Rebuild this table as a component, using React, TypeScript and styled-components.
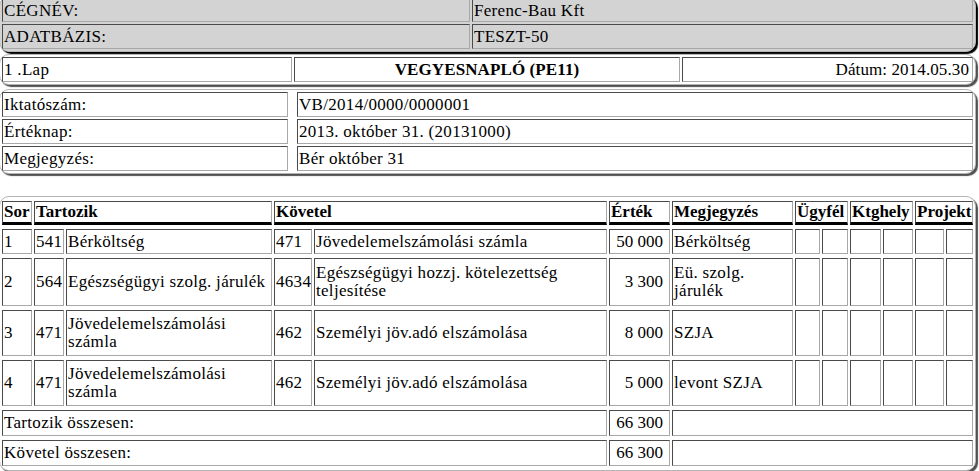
import React from 'react';
import styled, { createGlobalStyle } from 'styled-components';

const GlobalStyle = createGlobalStyle`
  *, *::before, *::after { box-sizing: border-box; }
  html, body { margin: 0; padding: 0; background: #fff; }
  body {
    font-family: "Liberation Serif", serif;
    font-size: 17px;
    color: #000;
  }
`;

const Page = styled.div`
  width: 979px;
  height: 471px;
  overflow: hidden;
`;

const Panel = styled.table<{ $top?: number; $vgap?: number; $gray?: boolean; $dark?: boolean }>`
  width: calc(100% - 2px);
  margin: ${p => p.$top ?? 2}px 0 0 -1px;
  table-layout: fixed;
  border-collapse: separate;
  border-spacing: 2px ${p => p.$vgap ?? 2}px;
  border: 1px solid #b4b4b4;
  border-radius: 10px;
  background: ${p => (p.$gray ? '#d3d3d3' : '#fff')};
  box-shadow: 2px 2px 1px ${p => (p.$dark ? '#000' : '#505050')};
  color: #000;
`;

const Row = styled.tr<{ $h?: number }>`
  height: ${p => p.$h ?? 25}px;
`;

const Cell = styled.td`
  padding: 0 1px;
  border: 1px solid;
  border-color: #4a4a4a #a8a8a8 #a8a8a8 #4a4a4a;
  vertical-align: middle;
  text-align: left;
  font-family: "Liberation Serif", serif;
  font-size: 17px;
  letter-spacing: 0.3px;
  line-height: 18px;
  overflow: hidden;
`;

const Title = styled(Cell)`
  text-align: center;
  font-weight: 700;
  letter-spacing: 0.1px;
`;

const DateCell = styled(Cell)`
  text-align: right;
  padding-right: 3px;
  letter-spacing: 0.1px;
`;

const Num = styled(Cell)`
  text-align: right;
  padding-right: 6px;
  white-space: nowrap;
  letter-spacing: 0;
`;

const Spacer = styled.td`
  border: none;
  padding: 0;
`;

const Head = styled.th`
  padding: 0 1px;
  border: 1px solid;
  border-color: #4a4a4a #a8a8a8 #000 #4a4a4a;
  border-bottom-width: 3px;
  text-align: left;
  font-family: "Liberation Serif", serif;
  font-size: 17px;
  font-weight: 700;
  white-space: nowrap;
  vertical-align: middle;
  overflow: hidden;
`;

type Entry = {
  sor: string;
  tAcc: string;
  tName: string;
  kAcc: string;
  kName: string;
  value: string;
  note: string;
  h: number;
};

const entries: Entry[] = [
  { sor: '1', tAcc: '541', tName: 'Bérköltség', kAcc: '471', kName: 'Jövedelemelszámolási számla', value: '50 000', note: 'Bérköltség', h: 25 },
  { sor: '2', tAcc: '564', tName: 'Egészségügyi szolg. járulék', kAcc: '4634', kName: 'Egészségügyi hozzj. kötelezettség teljesítése', value: '3 300', note: 'Eü. szolg. járulék', h: 48 },
  { sor: '3', tAcc: '471', tName: 'Jövedelemelszámolási számla', kAcc: '462', kName: 'Személyi jöv.adó elszámolása', value: '8 000', note: 'SZJA', h: 46 },
  { sor: '4', tAcc: '471', tName: 'Jövedelemelszámolási számla', kAcc: '462', kName: 'Személyi jöv.adó elszámolása', value: '5 000', note: 'levont SZJA', h: 46 },
];

// Sor, T.szla, T.név, K.szla, K.név, Érték, Megj., Ügyfél x2, Ktghely x2, Projekt x2
const colWidths = [30, 30, 206, 38, 293, 61, 121, 25, 26, 31, 30, 29];

export default function App() {
  return (
    <Page>
      <GlobalStyle />

      <Panel $top={-4} $gray $dark>
        <colgroup>
          <col width={468} />
          <col />
        </colgroup>
        <tbody>
          <Row $h={23}>
            <Cell>CÉGNÉV:</Cell>
            <Cell>Ferenc-Bau Kft</Cell>
          </Row>
          <Row>
            <Cell>ADATBÁZIS:</Cell>
            <Cell>TESZT-50</Cell>
          </Row>
        </tbody>
      </Panel>

      <Panel $top={2}>
        <colgroup>
          <col width={290} />
          <col width={386} />
          <col />
        </colgroup>
        <tbody>
          <Row>
            <Cell>1 .Lap</Cell>
            <Title>VEGYESNAPLÓ (PE11)</Title>
            <DateCell>Dátum: 2014.05.30</DateCell>
          </Row>
        </tbody>
      </Panel>

      <Panel $top={4}>
        <colgroup>
          <col width={286} />
          <col width={5} />
          <col />
        </colgroup>
        <tbody>
          <Row>
            <Cell>Iktatószám:</Cell>
            <Spacer />
            <Cell>VB/2014/0000/0000001</Cell>
          </Row>
          <Row>
            <Cell>Értéknap:</Cell>
            <Spacer />
            <Cell>2013. október 31. (20131000)</Cell>
          </Row>
          <Row>
            <Cell>Megjegyzés:</Cell>
            <Spacer />
            <Cell>Bér október 31</Cell>
          </Row>
        </tbody>
      </Panel>

      <Panel $top={22} $vgap={4}>
        <colgroup>
          {colWidths.map((w, i) => (
            <col key={i} width={w} />
          ))}
          <col />
        </colgroup>
        <thead>
          <Row $h={24}>
            <Head>Sor</Head>
            <Head colSpan={2}>Tartozik</Head>
            <Head colSpan={2}>Követel</Head>
            <Head>Érték</Head>
            <Head>Megjegyzés</Head>
            <Head colSpan={2}>Ügyfél</Head>
            <Head colSpan={2}>Ktghely</Head>
            <Head colSpan={2}>Projekt</Head>
          </Row>
        </thead>
        <tbody>
          {entries.map(e => (
            <Row key={e.sor} $h={e.h}>
              <Cell>{e.sor}</Cell>
              <Cell>{e.tAcc}</Cell>
              <Cell>{e.tName}</Cell>
              <Cell>{e.kAcc}</Cell>
              <Cell>{e.kName}</Cell>
              <Num>{e.value}</Num>
              <Cell>{e.note}</Cell>
              <Cell />
              <Cell />
              <Cell />
              <Cell />
              <Cell />
              <Cell />
            </Row>
          ))}
          <Row $h={26}>
            <Cell colSpan={5}>Tartozik összesen:</Cell>
            <Num>66 300</Num>
            <Cell colSpan={7} />
          </Row>
          <Row $h={26}>
            <Cell colSpan={5}>Követel összesen:</Cell>
            <Num>66 300</Num>
            <Cell colSpan={7} />
          </Row>
        </tbody>
      </Panel>
    </Page>
  );
}
